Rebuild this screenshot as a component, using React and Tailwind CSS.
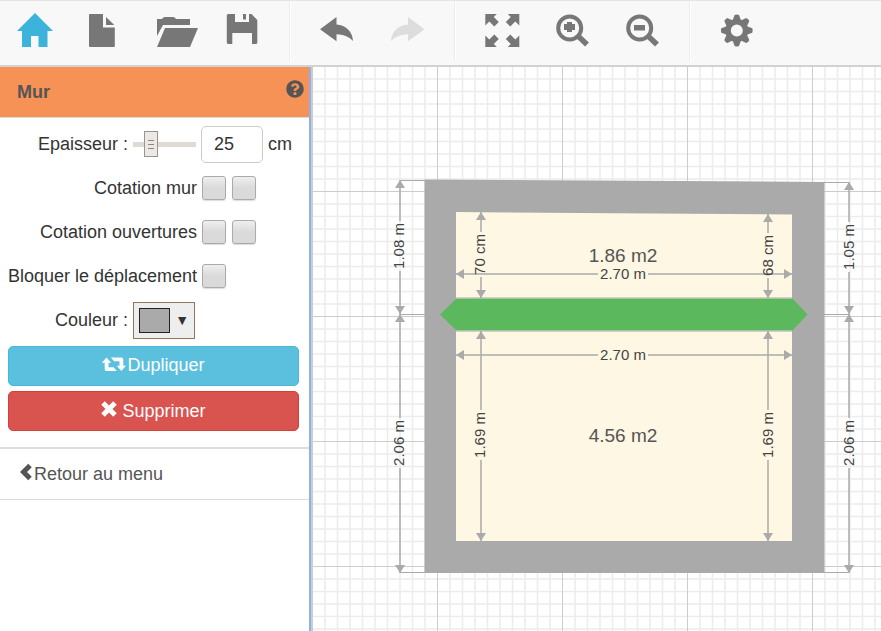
import React, { useState } from "react";
import { FaQuestionCircle } from "react-icons/fa";

function ToolIcon({ box, children }) {
  return (
    <svg viewBox={box} className="h-12 w-12" fill="currentColor" aria-hidden="true">
      {children}
    </svg>
  );
}

function ToolButton({ label, tone = "text-[#777]", disabled = false, children }) {
  return (
    <button
      type="button"
      aria-label={label}
      disabled={disabled}
      className={"flex w-[70px] items-center justify-center " + tone}
    >
      {children}
    </button>
  );
}

const arrowCorner = "M-17 -16.5H-5.5L-8.5 -13.5L-3.5 -8.5L-8 -4L-13 -9L-17 -5Z";
const gearTeeth = [0, 45, 90, 135, 180, 225, 270, 315];

function Toolbar() {
  const group = "flex border-r border-[#ececec] px-3 shadow-[1px_0_0_#fff]";
  return (
    <header className="flex h-[67px] shrink-0 border-t border-b-2 border-t-[#e4e4e4] border-b-[#d2d2d2] bg-[#f8f8f8] pb-1">
      <div className="flex border-r border-[#ececec] pr-[9px] shadow-[1px_0_0_#fff]">
        <ToolButton label="Accueil" tone="text-[#3bb3da]">
          <ToolIcon box="11 7 48 48">
            <path d="M35 13L53 31H47.5V47H38.5V36H31V47H22V31H17Z" />
          </ToolIcon>
        </ToolButton>
        <ToolButton label="Nouveau">
          <ToolIcon box="81 7 48 48">
            <path d="M90 14H103V27.5H114.8V46Q114.8 47 114 47H90Q89 47 89 46V15Q89 14 90 14ZM106 17L114.3 25H106Z" />
          </ToolIcon>
        </ToolButton>
        <ToolButton label="Ouvrir">
          <ToolIcon box="151 7 48 48">
            <path d="M157 19H162Q163 17 165 17H173Q175 17 176 19H190V25H163L157 36ZM165 28H198L190 47H157Z" />
          </ToolIcon>
        </ToolButton>
        <ToolButton label="Enregistrer">
          <ToolIcon box="221 7 48 48">
            <path d="M228 14H235V22H249V14H251.5L257.3 20V43L256.3 44H252V33H232.3V44H228L226.8 43V15ZM243 14H246V19.5H243Z" />
          </ToolIcon>
        </ToolButton>
      </div>
      <div className={group}>
        <ToolButton label="Annuler">
          <ToolIcon box="313 7 48 48">
            <path d="M320 29.3L336.5 17V24.5C346 25 352.5 31.5 353 41C349 36.5 343 34.5 336.5 34.3V41.3Z" />
          </ToolIcon>
        </ToolButton>
        <ToolButton label="Rétablir" tone="text-[#ddd]" disabled>
          <ToolIcon box="383 7 48 48">
            <path d="M424.5 29.3L408 17V24.5C398.5 25 391.5 31.5 391 41C395.5 36.5 401.5 34.5 408 34.3V41.3Z" />
          </ToolIcon>
        </ToolButton>
      </div>
      <div className={group}>
        <ToolButton label="Plein écran">
          <ToolIcon box="478 7 48 48">
            <g transform="translate(502.3 30.5)">
              <path d={arrowCorner} />
              <path d={arrowCorner} transform="scale(-1 1)" />
              <path d={arrowCorner} transform="scale(1 -1)" />
              <path d={arrowCorner} transform="scale(-1 -1)" />
            </g>
          </ToolIcon>
        </ToolButton>
        <ToolButton label="Zoom avant">
          <ToolIcon box="548 7 48 48">
            <circle cx="569.7" cy="28" r="11.5" fill="none" stroke="currentColor" strokeWidth="4" />
            <path d="M578 36L587 44.5" stroke="currentColor" strokeWidth="5.5" />
            <path d="M567 22H572V24H575V30H572V32H567V30H564V24H567Z" />
          </ToolIcon>
        </ToolButton>
        <ToolButton label="Zoom arrière">
          <ToolIcon box="618 7 48 48">
            <circle cx="639.7" cy="28" r="11.5" fill="none" stroke="currentColor" strokeWidth="4" />
            <path d="M648 36L657 44.5" stroke="currentColor" strokeWidth="5.5" />
            <path d="M634 25H645V30.5H634Z" />
          </ToolIcon>
        </ToolButton>
      </div>
      <div className="flex px-3">
        <ToolButton label="Paramètres">
          <ToolIcon box="713 7 48 48">
            <g transform="translate(736.8 30.5)">
              <circle r="8.7" fill="none" stroke="currentColor" strokeWidth="5.4" />
              {gearTeeth.map((a) => (
                <path key={a} d="M-4.2 -10L-2.2 -15.5Q0 -16.5 2.2 -15.5L4.2 -10Z" transform={`rotate(${a})`} />
              ))}
            </g>
          </ToolIcon>
        </ToolButton>
      </div>
    </header>
  );
}

function Tick({ label, id }) {
  return (
    <input
      type="checkbox"
      id={id}
      aria-label={label}
      className="h-6 w-6 appearance-none rounded-[3px] border border-[#aaa] bg-linear-to-b from-[#efefef] to-[#dadada] to-50% shadow-[0_1px_1px_#ddd] checked:from-[#bbb] checked:to-[#999]"
    />
  );
}

function Sidebar() {
  const [size, setSize] = useState("25");
  const row = "flex h-11 items-center";
  const wide = "w-[197px] shrink-0 text-right whitespace-nowrap";
  const narrow = "w-[128px] shrink-0 text-right whitespace-nowrap";
  return (
    <aside className="w-[311px] shrink-0 border-r-2 border-[#8fb0e8] bg-white">
      <div className="flex h-[51px] items-center justify-between border-b border-[#ddd] bg-[#f79256] pr-[5px] pl-[17px] text-[#555]">
        <h1 className="text-lg font-bold">Mur</h1>
        <button type="button" aria-label="Aide" className="pb-1.5">
          <FaQuestionCircle size={18} />
        </button>
      </div>
      <form className="pt-1" onSubmit={(e) => e.preventDefault()}>
        <div className={row}>
          <label htmlFor="thickness" className={narrow}>Epaisseur :</label>
          <input
            type="range"
            aria-label="Epaisseur"
            min="0"
            max="110"
            value={size}
            onChange={(e) => setSize(e.target.value)}
            className="ml-[5px] h-[26px] w-[63px] appearance-none bg-[linear-gradient(#e0dad4,#e0dad4)] bg-[length:100%_5px] bg-center bg-no-repeat [&::-webkit-slider-thumb]:h-[26px] [&::-webkit-slider-thumb]:w-[14px] [&::-webkit-slider-thumb]:appearance-none [&::-webkit-slider-thumb]:border [&::-webkit-slider-thumb]:border-[#9a948c] [&::-webkit-slider-thumb]:bg-[#ece8e4] [&::-webkit-slider-thumb]:bg-[repeating-linear-gradient(#8a857e_0_1px,#ece8e4_1px_4px)] [&::-webkit-slider-thumb]:bg-[length:6px_9px] [&::-webkit-slider-thumb]:bg-center [&::-webkit-slider-thumb]:bg-no-repeat"
          />
          <input
            id="thickness"
            type="text"
            value={size}
            onChange={(e) => setSize(e.target.value)}
            className="ml-[5px] h-[37px] w-[62px] rounded-[5px] border border-[#ccc] bg-white px-3"
          />
          <span className="ml-[5px]">cm</span>
        </div>
        <div className={row}>
          <label htmlFor="wall-a" className={wide}>Cotation mur</label>
          <div className="ml-[5px] flex gap-1.5">
            <Tick id="wall-a" label="Cotation mur, côté 1" />
            <Tick id="wall-b" label="Cotation mur, côté 2" />
          </div>
        </div>
        <div className={row}>
          <label htmlFor="open-a" className={wide}>Cotation ouvertures</label>
          <div className="ml-[5px] flex gap-1.5">
            <Tick id="open-a" label="Cotation ouvertures, côté 1" />
            <Tick id="open-b" label="Cotation ouvertures, côté 2" />
          </div>
        </div>
        <div className={row}>
          <label htmlFor="lock" className={wide}>Bloquer le déplacement</label>
          <div className="ml-[5px] flex">
            <Tick id="lock" label="Bloquer le déplacement" />
          </div>
        </div>
        <div className={row}>
          <label htmlFor="colour" className={narrow}>Couleur :</label>
          <button
            id="colour"
            type="button"
            aria-haspopup="dialog"
            className="ml-[5px] flex h-[37px] w-[62px] items-center justify-between border border-[#91765d] bg-[#eee] px-[5px]"
          >
            <span className="h-[25px] w-[31px] border border-[#222] bg-[#aaa]" />
            <span className="text-sm leading-none">▼</span>
          </button>
        </div>
        <div className="mt-1 mr-2.5 ml-2 flex flex-col gap-[5px] text-white">
          <button type="button" className="flex h-10 items-center justify-center rounded-[5px] border border-[#46b8da] bg-[#5bc0de] pb-0.5">
            <svg viewBox="102 355 25 16" className="mb-0.5 h-4 w-[25px]" fill="currentColor" aria-hidden="true">
              <path d="M101.800 361.800L106.500 356.500L111.200 361.800H108.500V366.300H113.500L116.800 370H106.500Q104.700 370 104.700 368.200V361.800Z" />
              <path d="M110.800 356.500H121.300Q123.300 356.500 123.300 358.500V364.800H126L121.300 370L116.800 364.800H119.500V360.200H114.200Z" />
            </svg>
            Dupliquer
          </button>
          <button type="button" className="flex h-10 items-center justify-center gap-[5px] rounded-[5px] border border-[#d43f3a] bg-[#d9534f]">
            <svg viewBox="0 0 16 16" className="mb-1 h-4 w-4" aria-hidden="true">
              <path d="M2 2L14 14M14 2L2 14" stroke="currentColor" strokeWidth="5" fill="none" />
            </svg>
            Supprimer
          </button>
        </div>
      </form>
      <a href="#menu" className="mt-4 flex h-[53px] items-center border-t-2 border-b border-[#ddd] pl-5 text-[#555]">
        <svg viewBox="1 0 14 18" className="mb-1 h-[18px] w-[14px]" aria-hidden="true">
          <path d="M11 2.500L4.500 9L11 15.500" stroke="currentColor" strokeWidth="5" fill="none" />
        </svg>
        Retour au menu
      </a>
    </aside>
  );
}

// A measured line broken around its label, with a head at both ends.
function Dimension({ at, from, to, gap, label, vertical = false, base }) {
  const line = vertical
    ? `M${at} ${from}V${gap[0]}M${at} ${gap[1]}V${to}`
    : `M${from} ${at}H${gap[0]}M${gap[1]} ${at}H${to}`;
  const heads = vertical
    ? `M${at} ${from}l5 8h-10zM${at} ${to}l5 -8h-10z`
    : `M${from} ${at}l8 -5v10zM${to} ${at}l-8 -5v10z`;
  const mid = (gap[0] + gap[1]) / 2;
  return (
    <g>
      <path d={line} stroke="#aaa" strokeWidth="1.500" />
      <path d={heads} fill="#aaa" />
      <text
        textAnchor="middle"
        fontSize="15"
        fill="#444"
        transform={vertical ? `translate(${base} ${mid}) rotate(-90)` : `translate(${mid} ${base})`}
      >
        {label}
      </text>
    </g>
  );
}

const minor = [1, 2, 3, 4, 5, 6, 7, 8, 9].map((n) => n * 12.5);

function Plan() {
  return (
    <main className="min-w-0 flex-1 overflow-hidden border-l-2 border-[#ccc] bg-white">
      <svg className="block h-full w-full" role="img" aria-label="Plan">
        <g transform="translate(-313 -67)">
          <defs>
            <pattern id="grid" x="437" y="191" width="125" height="125" patternUnits="userSpaceOnUse">
              {minor.map((n) => (
                <path key={n} d={`M${n + 0.5} 0V125M0 ${n + 0.5}H125`} stroke="#ececec" strokeWidth="1.500" />
              ))}
              <path d="M.5 0V125M0 .5H125" stroke="#ccc" />
            </pattern>
          </defs>
          <rect x="313" y="67" width="4000" height="4000" fill="url(#grid)" />
          <path d="M424.500 179.500L824.500 182V573H424.500Z" fill="#aaa" />
          <path d="M456 212L792 214.500V541H456Z" fill="#fdf7e3" />
          <path d="M400 180.500H425M400 314.500H425M400 572.500H425M824 182.500H849M824 314.500H849M824 572.500H849" stroke="#aaa" />
          <path d="M440 314.500L456.500 298.500H792.500L807.500 314.500L792.500 330.500H456.500Z" fill="#5cb85c" />
          <path d="M456 298H792M456 331H792" stroke="#aaa" />
          <text x="623" y="262" textAnchor="middle" fontSize="19" fill="#555">1.86 m2</text>
          <text x="623" y="442" textAnchor="middle" fontSize="19" fill="#555">4.56 m2</text>
          <Dimension at={274} from={456} to={792} gap={[598, 648]} base={279} label="2.70 m" />
          <Dimension at={355} from={456} to={792} gap={[598, 648]} base={360} label="2.70 m" />
          <Dimension vertical at={481} from={212} to={298} gap={[232, 277]} base={485} label="70 cm" />
          <Dimension vertical at={768} from={214} to={298} gap={[233, 278]} base={773} label="68 cm" />
          <Dimension vertical at={481} from={331} to={541} gap={[410, 460]} base={485} label="1.69 m" />
          <Dimension vertical at={768} from={331} to={541} gap={[410, 460]} base={773} label="1.69 m" />
          <Dimension vertical at={400} from={180} to={314} gap={[221, 271]} base={404} label="1.08 m" />
          <Dimension vertical at={400} from={314} to={573} gap={[418, 468]} base={404} label="2.06 m" />
          <Dimension vertical at={849} from={182} to={314} gap={[222, 272]} base={854} label="1.05 m" />
          <Dimension vertical at={849} from={314} to={573} gap={[418, 468]} base={854} label="2.06 m" />
        </g>
      </svg>
    </main>
  );
}

export default function App() {
  return (
    <div className="flex h-screen flex-col bg-white font-['Liberation_Sans',Arial,sans-serif] text-lg text-[#333]">
      <Toolbar />
      <div className="flex min-h-0 flex-1">
        <Sidebar />
        <Plan />
      </div>
    </div>
  );
}
